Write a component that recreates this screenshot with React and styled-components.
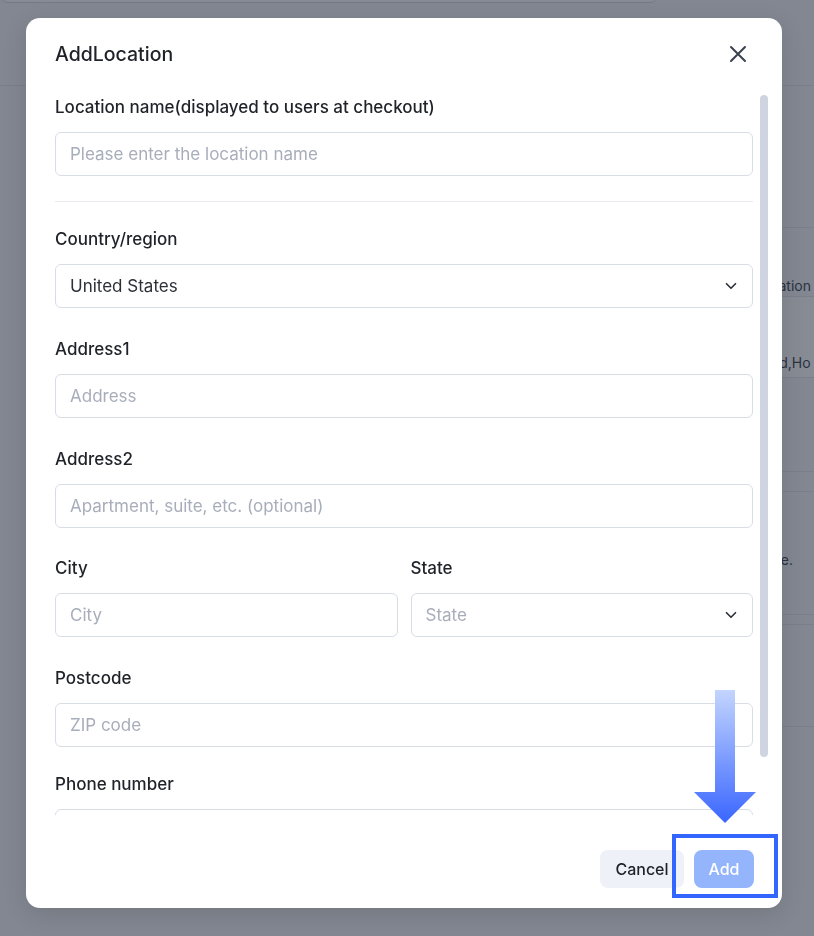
import React from "react";
import styled, { createGlobalStyle } from "styled-components";
import { ChevronDown } from "lucide-react";

const GlobalStyle = createGlobalStyle`
    * { box-sizing: border-box; }
    html, body { margin: 0; padding: 0; height: 100%; }
    body {
        font-family: Inter, "Noto Sans", sans-serif;
        background: #f5f6f8;
        overflow: hidden;
    }
`;

/* page behind the dialog */
const Page = styled.div`
    height: 936px;
    display: flex;
    flex-direction: column;
`;
const PageHeader = styled.div`
    height: 86px;
    border-bottom: 1px solid #e3e6ec;
`;
const SearchBox = styled.div`
    width: 658px;
    height: 33px;
    margin-top: -30px;
    background: #fff;
    border: 1px solid #d6dae2;
    border-radius: 0 0 8px 8px;
`;
const Table = styled.div`
    margin: 141px 0 0 300px;
    border-top: 1px solid #e3e6ec;
    display: flex;
    flex-direction: column;
`;
const TableRow = styled.div`
    height: ${(p) => p.$h}px;
    padding-top: ${(p) => p.$pt || 0}px;
    padding-left: 454px;
    background: ${(p) => (p.$light ? "#fff" : "transparent")};
    border-bottom: 1px solid #e3e6ec;
    font-size: 14px;
    color: #4a4f5a;
    white-space: nowrap;
`;

/* dialog */
const Overlay = styled.div`
    position: fixed;
    inset: 0;
    background: rgba(15, 23, 42, 0.5);
    padding: 18px 0 0 26px;
`;
const Modal = styled.div`
    width: 756px;
    height: 890px;
    background: #fff;
    border-radius: 14px;
    box-shadow: 0 6px 24px rgba(0, 0, 0, 0.12);
    display: flex;
    flex-direction: column;
`;
const Header = styled.div`
    display: flex;
    align-items: center;
    justify-content: space-between;
    padding: 22px 32px 18px 29px;
`;
const Title = styled.h2`
    margin: 0;
    font-size: 19.5px;
    line-height: 28px;
    font-weight: 500;
    color: #1f2329;
`;
const CloseButton = styled.button`
    width: 24px;
    height: 24px;
    border: none;
    background: none;
    padding: 0;
    display: flex;
    align-items: center;
    justify-content: center;
    color: #3b4150;
`;
const Body = styled.div`
    flex: 1;
    min-height: 0;
    display: flex;
    gap: 7px;
    padding: 0 14px 0 29px;
`;
const Scroll = styled.div`
    flex: 1;
    overflow: hidden;
    padding-top: 9px;
    display: flex;
    flex-direction: column;
`;
const Track = styled.div`
    width: 8px;
    padding-top: 9px;
`;
const Thumb = styled.div`
    height: 662px;
    border-radius: 4px;
    background: #cfd5e0;
`;
const Field = styled.div`
    display: flex;
    flex-direction: column;
    gap: 13px;
    margin-bottom: ${(p) => p.$mb ?? 29}px;
    flex-shrink: 0;
`;
const Label = styled.label`
    font-size: 17px;
    line-height: 24px;
    font-weight: 500;
    color: #1f2329;
`;
const Input = styled.input`
    height: 44px;
    width: 100%;
    border: 1px solid #d8dce5;
    border-radius: 6px;
    padding: 0 14px;
    font-family: inherit;
    font-size: 17px;
    color: #2c3038;
    outline: none;
    &::placeholder { color: #a7adba; }
`;
const Select = styled.div`
    height: 44px;
    border: 1px solid #d8dce5;
    border-radius: 6px;
    padding: 0 12px 0 14px;
    display: flex;
    align-items: center;
    justify-content: space-between;
    font-size: 17px;
    color: ${(p) => (p.$placeholder ? "#a7adba" : "#2c3038")};
    svg { color: #2c3038; }
`;
const Divider = styled.hr`
    margin: 0 0 25px;
    border: none;
    border-top: 1px solid #e8eaef;
    flex-shrink: 0;
`;
const Row = styled.div`
    display: grid;
    grid-template-columns: 1fr 1fr;
    gap: 13px;
    flex-shrink: 0;
`;
const Footer = styled.div`
    display: flex;
    justify-content: flex-end;
    gap: 10px;
    padding: 35px 28px 20px 0;
`;
const Button = styled.button`
    height: 38px;
    padding: 0 ${(p) => (p.$primary ? 14 : 13)}px;
    border: none;
    border-radius: 8px;
    font-family: inherit;
    font-size: 16px;
    font-weight: 500;
    background: ${(p) => (p.$primary ? "#94b4fb" : "#eef1f8")};
    color: ${(p) => (p.$primary ? "#fff" : "#1f2329")};
    min-width: ${(p) => (p.$primary ? 60 : 84)}px;
`;

/* annotation layer */
const Annotations = styled.div`
    position: fixed;
    inset: 0;
    pointer-events: none;
`;
const Arrow = styled.svg`
    position: absolute;
    left: 694px;
    top: 690px;
`;
const Highlight = styled.div`
    position: absolute;
    left: 672px;
    top: 834px;
    width: 106px;
    height: 64px;
    border: 4px solid #3366ff;
`;

const rows = [
    { h: 69, pt: 49, text: "Location" },
    { h: 81, pt: 57, text: "Road,Ho", light: true },
    { h: 94 },
    { h: 20 },
    { h: 123, pt: 59, text: "Store." },
    { h: 10 },
    { h: 102 },
];

const App = () => {
    return (
        <>
            <GlobalStyle />
            <Page>
                <PageHeader>
                    <SearchBox />
                </PageHeader>
                <Table>
                    {rows.map((r, i) => (
                        <TableRow key={i} $h={r.h} $pt={r.pt} $light={r.light}>
                            {r.text}
                        </TableRow>
                    ))}
                </Table>
            </Page>
            <Overlay>
                <Modal>
                    <Header>
                        <Title>AddLocation</Title>
                        <CloseButton>
                            <svg width="18" height="18" viewBox="0 0 18 18">
                                <path d="M2 2 L16 16 M16 2 L2 16" stroke="currentColor" strokeWidth="2" strokeLinecap="round" />
                            </svg>
                        </CloseButton>
                    </Header>
                    <Body>
                        <Scroll>
                            <Field $mb={25}>
                                <Label>Location name(displayed to users at checkout)</Label>
                                <Input placeholder="Please enter the location name" />
                            </Field>
                            <Divider />
                            <Field>
                                <Label>Country/region</Label>
                                <Select>
                                    United States
                                    <ChevronDown size={18} strokeWidth={2.2} />
                                </Select>
                            </Field>
                            <Field>
                                <Label>Address1</Label>
                                <Input placeholder="Address" />
                            </Field>
                            <Field $mb={28}>
                                <Label>Address2</Label>
                                <Input placeholder="Apartment, suite, etc. (optional)" />
                            </Field>
                            <Row>
                                <Field>
                                    <Label>City</Label>
                                    <Input placeholder="City" />
                                </Field>
                                <Field>
                                    <Label>State</Label>
                                    <Select $placeholder>
                                        State
                                        <ChevronDown size={18} strokeWidth={2.2} />
                                    </Select>
                                </Field>
                            </Row>
                            <Field $mb={25}>
                                <Label>Postcode</Label>
                                <Input placeholder="ZIP code" />
                            </Field>
                            <Field>
                                <Label>Phone number</Label>
                                <Input />
                            </Field>
                        </Scroll>
                        <Track>
                            <Thumb />
                        </Track>
                    </Body>
                    <Footer>
                        <Button>Cancel</Button>
                        <Button $primary>Add</Button>
                    </Footer>
                </Modal>
            </Overlay>
            <Annotations>
                <Arrow width="62" height="133" viewBox="0 0 62 133">
                    <defs>
                        <linearGradient id="arrowFill" x1="0" y1="0" x2="0" y2="1">
                            <stop offset="0" stopColor="#c3d5ff" />
                            <stop offset="1" stopColor="#3a66ff" />
                        </linearGradient>
                    </defs>
                    <path d="M21 0 H41 V102 H62 L31 133 L0 102 H21 Z" fill="url(#arrowFill)" />
                </Arrow>
                <Highlight />
            </Annotations>
        </>
    );
};

export default App;
